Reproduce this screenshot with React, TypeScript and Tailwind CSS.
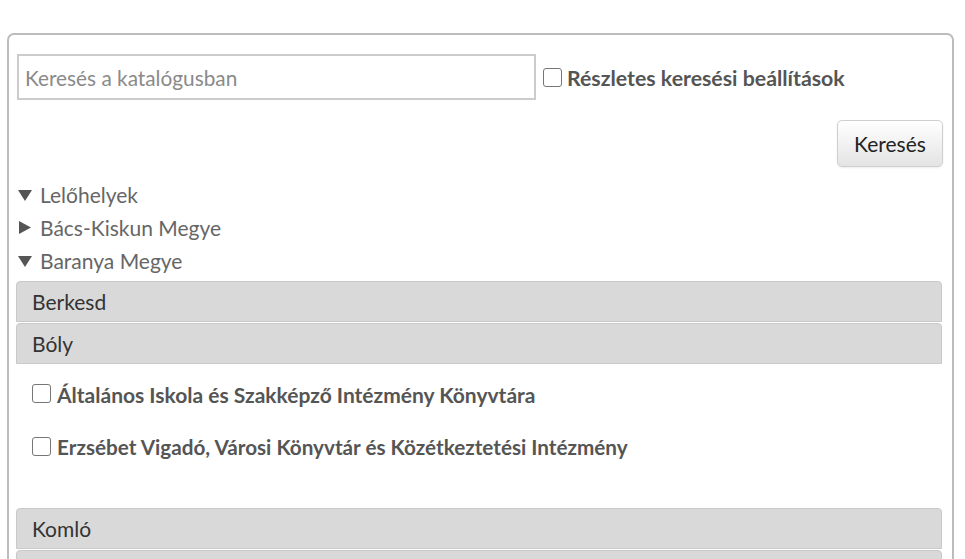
import React from "react";

const font = { fontFamily: "Lato, 'Open Sans', sans-serif" };

function Caret({ open }: { open: boolean }) {
  return open ? (
    <svg width="14" height="12" viewBox="0 0 14 12" className="shrink-0">
      <polygon points="0,1 14,1 7,12" fill="#555" />
    </svg>
  ) : (
    <svg width="12" height="13" viewBox="0 0 12 13" className="shrink-0 ml-[1px] mr-[1px]">
      <polygon points="0,0 12,6.5 0,13" fill="#555" />
    </svg>
  );
}

function Box({ className = "" }: { className?: string }) {
  return (
    <span
      className={`inline-block w-[19px] h-[19px] rounded-[3px] border border-[#767676] bg-white shrink-0 ${className}`}
    />
  );
}

function Header({ label }: { label?: string }) {
  return (
    <div className="h-[41px] bg-[#d9d9d9] border border-[#c9c9c9] rounded-t-[4px] pl-[15px] flex items-center text-[21px] text-[#333] mb-[1px]">
      {label}
    </div>
  );
}

const tree = [
  { label: "Lelőhelyek", open: true },
  { label: "Bács-Kiskun Megye", open: false },
  { label: "Baranya Megye", open: true },
];

const libraries = [
  { label: "Általános Iskola és Szakképző Intézmény Könyvtára", size: "text-[21px]" },
  { label: "Erzsébet Vigadó, Városi Könyvtár és Közétkeztetési Intézmény", size: "text-[20.7px]" },
];

export default function App() {
  return (
    <div className="bg-white w-[965px] h-[559px] overflow-hidden pt-[33px] pl-[7px] pr-[11px]" style={font}>
      <div className="border-2 border-[#bcbcbc] rounded-t-[7px] pt-[19px] pl-[8px] pr-[9px] pb-10">
        <div className="flex items-center">
          <input
            placeholder="Keresés a katalógusban"
            className="w-[519px] h-[46px] border-2 border-[#cccccc] pl-[6px] text-[20.8px] text-[#555] placeholder:text-[#8a8a8a] outline-none"
            style={font}
          />
          <label className="flex items-center ml-[7px] mt-[4px]">
            <Box className="mr-[5px] -mt-[3px]" />
            <span className="text-[21.3px] font-bold text-[#555]">Részletes keresési beállítások</span>
          </label>
        </div>

        <div className="flex justify-end mt-[20px]">
          <button className="w-[106px] h-[47px] rounded-[5px] border border-[#cfcfcf] bg-gradient-to-b from-white to-[#e4e4e4] text-[21px] text-[#222] shadow-[0_1px_2px_rgba(0,0,0,0.08)]">
            Keresés
          </button>
        </div>

        <div className="mt-[11px] pl-[1px]">
          {tree.map((t) => (
            <div key={t.label} className="h-[33px] flex items-center gap-[8px] text-[21px] text-[#666]">
              <Caret open={t.open} />
              <span>{t.label}</span>
            </div>
          ))}
        </div>

        <div className="ml-[-1px] mt-[4px] mr-[1px]">
          <Header label="Berkesd" />
          <Header label="Bóly" />
          <div className="pt-[17px] pb-[47px] pl-[16px] flex flex-col gap-[27px]">
            {libraries.map((l) => (
              <label key={l.label} className="h-[26px] flex items-center">
                <Box className="mr-[6px] -mt-[4px]" />
                <span className={`${l.size} font-bold text-[#555]`}>{l.label}</span>
              </label>
            ))}
          </div>
          <Header label="Komló" />
          <Header />
        </div>
      </div>
    </div>
  );
}
